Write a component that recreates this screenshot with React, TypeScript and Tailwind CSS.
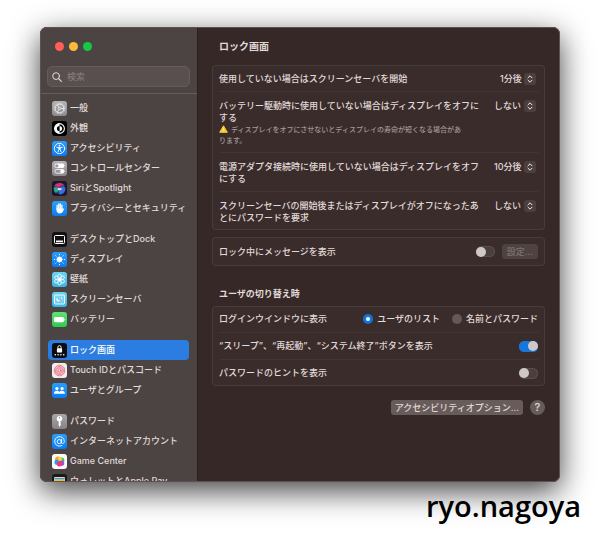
import React, { useState } from "react";
import type { ReactNode } from "react";

type Item = { label: string; tile: string; icon: ReactNode };

const fingerprint = (
  <g fill="none" stroke="#e8677c" strokeWidth="0.9" strokeLinecap="round">
    <circle cx="7.5" cy="7.5" r="5.3" strokeDasharray="5 0.8" />
    <circle cx="7.5" cy="7.5" r="4" strokeDasharray="4 0.7" />
    <circle cx="7.5" cy="7.5" r="2.7" strokeDasharray="3 0.6" />
    <circle cx="7.5" cy="7.5" r="1.4" />
  </g>
);

const groups: Item[][] = [
  [
    {
      label: "一般",
      tile: "bg-linear-to-b from-[#b5b3b6] to-[#8b898d]",
      icon: (
        <g fill="none" stroke="#f2f2f2">
          <circle cx="7.5" cy="7.5" r="4.4" strokeWidth="0.9" />
          <circle cx="7.5" cy="7.5" r="5.3" strokeWidth="0.9" strokeDasharray="0.8 0.86" />
          <circle cx="7.5" cy="7.5" r="1.2" strokeWidth="0.7" />
          <path d="M8.7 7.5h3.2M6.9 6.5 5.3 3.7M6.9 8.5l-1.6 2.8" strokeWidth="0.8" />
        </g>
      ),
    },
    {
      label: "外観",
      tile: "bg-black",
      icon: (
        <g>
          <circle cx="7.5" cy="7.5" r="4.9" fill="none" stroke="#fff" strokeWidth="1.1" />
          <path d="M7.5 2.6a4.9 4.9 0 0 0 0 9.8z" fill="#fff" />
          <path d="M7.5 4.9a2.6 2.6 0 0 1 0 5.2z" fill="#fff" />
          <path d="M7.5 4.9a2.6 2.6 0 0 0 0 5.2z" fill="#000" />
        </g>
      ),
    },
    {
      label: "アクセシビリティ",
      tile: "bg-linear-to-b from-[#2a9dfc] to-[#0a7cf5]",
      icon: (
        <g fill="none" stroke="#fff" strokeLinecap="round">
          <circle cx="7.5" cy="7.5" r="5.2" strokeWidth="0.9" />
          <circle cx="7.5" cy="4.6" r="0.9" fill="#fff" stroke="none" />
          <path d="M4.7 6.3l2 .4h1.6l2-.4M6.8 6.7v1.8l-.9 2.5M8.2 6.7v1.8l.9 2.5M7.5 6.7v1.6" strokeWidth="0.9" />
        </g>
      ),
    },
    {
      label: "コントロールセンター",
      tile: "bg-linear-to-b from-[#b5b3b6] to-[#8b898d]",
      icon: (
        <g>
          <rect x="2.5" y="2.6" width="10" height="4.4" rx="2.2" fill="#fff" />
          <circle cx="4.8" cy="4.8" r="1.6" fill="#9b999c" />
          <rect x="2.9" y="8.4" width="9.2" height="3.8" rx="1.9" fill="none" stroke="#fff" strokeWidth="0.8" />
          <circle cx="10.2" cy="10.3" r="2" fill="#fff" />
        </g>
      ),
    },
    {
      label: "SiriとSpotlight",
      tile: "bg-[#1c1530]",
      icon: (
        <g>
          <circle cx="7.5" cy="7.5" r="6" fill="#20365a" />
          <path d="M2 5.5C4 1 10.5 0.8 12.7 5 10 3.8 7.5 5 7 7.5 5.5 5.5 3.5 5 2 5.5z" fill="#d62f6d" />
          <path d="M1.7 7c2-1.8 4.3-.8 5.5.8-.4 2.2-2 4-3.6 4.2A6 6 0 0 1 1.7 7z" fill="#2aa58a" />
          <path d="M7 7.5c2-2.5 4.8-2.3 6.3-.6.5 3-1.8 6.3-5.3 6.5-1.7-1.4-2-4-1-5.9z" fill="#3a6fd8" />
          <path d="M5.2 8.3C6.4 6.6 8.5 6.4 10 8c-1.2 1.6-3.4 1.9-4.8.3z" fill="#f4f0fb" opacity="0.9" />
        </g>
      ),
    },
    {
      label: "プライバシーとセキュリティ",
      tile: "bg-linear-to-b from-[#2a9dfc] to-[#0a7cf5]",
      icon: (
        <g fill="none" stroke="#fff" strokeLinecap="round" strokeWidth="1.3">
          <path d="M5.1 8V4.3M6.7 7V3M8.3 7V3M9.9 8V4.1" />
          <path d="M4.5 7.3h6v1.5l1.2-1.5.6.5-1.7 3.2c-.6 1-1.5 1.4-2.8 1.4-2 0-3.3-1.3-3.3-3.2z" fill="#fff" stroke="none" />
        </g>
      ),
    },
  ],
  [
    {
      label: "デスクトップとDock",
      tile: "bg-[#111]",
      icon: (
        <g>
          <rect x="2.5" y="3.5" width="10" height="8" rx="1" fill="none" stroke="#fff" />
          <rect x="4" y="8.5" width="7" height="1.8" rx="0.3" fill="#fff" />
        </g>
      ),
    },
    {
      label: "ディスプレイ",
      tile: "bg-linear-to-b from-[#2a9dfc] to-[#0a7cf5]",
      icon: (
        <g stroke="#fff" strokeLinecap="round" strokeWidth="1">
          <circle cx="7.5" cy="7.5" r="2.5" fill="#fff" />
          <path d="M7.5 2.3v.4M7.5 12.3v.4M2.3 7.5h.4M12.3 7.5h.4M3.8 3.8l.3.3M10.9 10.9l.3.3M3.8 11.2l.3-.3M10.9 4.1l.3-.3" />
        </g>
      ),
    },
    {
      label: "壁紙",
      tile: "bg-linear-to-b from-[#6bd3f5] to-[#37b6e6]",
      icon: (
        <g fill="none" stroke="#fff" strokeWidth="0.8">
          <ellipse cx="7.5" cy="4.6" rx="1.8" ry="2.6" />
          <ellipse cx="7.5" cy="10.4" rx="1.8" ry="2.6" />
          <ellipse cx="7.5" cy="4.6" rx="1.8" ry="2.6" transform="rotate(60 7.5 7.5)" />
          <ellipse cx="7.5" cy="4.6" rx="1.8" ry="2.6" transform="rotate(120 7.5 7.5)" />
          <ellipse cx="7.5" cy="4.6" rx="1.8" ry="2.6" transform="rotate(240 7.5 7.5)" />
          <ellipse cx="7.5" cy="4.6" rx="1.8" ry="2.6" transform="rotate(300 7.5 7.5)" />
          <circle cx="7.5" cy="7.5" r="1.1" fill="#fff" />
        </g>
      ),
    },
    {
      label: "スクリーンセーバ",
      tile: "bg-linear-to-b from-[#6bd3f5] to-[#37b6e6]",
      icon: (
        <g>
          <rect x="2.5" y="3" width="10" height="9" rx="0.8" fill="#ffffff33" stroke="#fff" strokeWidth="0.9" />
          <path d="M5.6 5.6a2.1 2.1 0 1 0 2.7 2.9 2.2 2.2 0 0 1-2.7-2.9z" fill="#fff" />
          <circle cx="9.6" cy="6.2" r="0.7" fill="#fff" />
          <circle cx="10.3" cy="9" r="0.5" fill="#fff" />
        </g>
      ),
    },
    {
      label: "バッテリー",
      tile: "bg-linear-to-b from-[#5fe276] to-[#2fc950]",
      icon: (
        <g fill="#fff">
          <rect x="2" y="5" width="10" height="5.2" rx="1.4" />
          <path d="M12.5 6.5c.7.2.9.6.9 1.1s-.2.9-.9 1.1z" />
        </g>
      ),
    },
  ],
  [
    {
      label: "ロック画面",
      tile: "bg-[#0d0d0f]",
      icon: (
        <g>
          <path d="M5.9 5.5V4.2a1.6 1.6 0 0 1 3.2 0v1.3" fill="none" stroke="#fff" strokeWidth="0.9" />
          <rect x="4.9" y="5.2" width="5.2" height="4.2" rx="0.7" fill="#fff" />
          <g fill="#fff">
            <circle cx="3.3" cy="11.7" r="0.8" />
            <circle cx="6.1" cy="11.7" r="0.8" />
            <circle cx="8.9" cy="11.7" r="0.8" />
            <circle cx="11.7" cy="11.7" r="0.8" />
          </g>
        </g>
      ),
    },
    { label: "Touch IDとパスコード", tile: "bg-[#f1eded]", icon: fingerprint },
    {
      label: "ユーザとグループ",
      tile: "bg-linear-to-b from-[#2a9dfc] to-[#0a7cf5]",
      icon: (
        <g fill="#fff">
          <circle cx="4.9" cy="5.5" r="1.6" />
          <circle cx="10.1" cy="5.5" r="1.6" />
          <path d="M1.9 10.8c0-2 1.3-3 3-3 1.1 0 2 .5 2.5 1.3.5-.8 1.5-1.3 2.6-1.3 1.7 0 3 1 3 3z" />
        </g>
      ),
    },
  ],
  [
    {
      label: "パスワード",
      tile: "bg-linear-to-b from-[#a9a7aa] to-[#858387]",
      icon: (
        <g>
          <circle cx="7.5" cy="4.8" r="2.7" fill="#fff" />
          <circle cx="7.5" cy="3.8" r="0.7" fill="#8f8d91" />
          <path d="M6.7 7h1.6v1.2l.9.7-.9.7.8.8-.8.7v.9l-.8.8-.8-.8z" fill="#fff" />
        </g>
      ),
    },
    {
      label: "インターネットアカウント",
      tile: "bg-linear-to-b from-[#2a9dfc] to-[#0a7cf5]",
      icon: (
        <g fill="none" stroke="#fff" strokeWidth="0.9" strokeLinecap="round">
          <circle cx="7.3" cy="7.6" r="2.1" />
          <path d="M9.5 5.5v3c0 1.6 2.8 1.5 2.8-1.1a4.8 4.8 0 1 0-2.4 4.2" />
        </g>
      ),
    },
    {
      label: "Game Center",
      tile: "bg-[#fafafa]",
      icon: (
        <g>
          <circle cx="6" cy="5.6" r="3" fill="#f9a825" />
          <circle cx="9.3" cy="6.5" r="3.1" fill="#35c759" />
          <circle cx="5.1" cy="8.2" r="2.6" fill="#1fa2f5" />
          <circle cx="9.6" cy="9.2" r="2.6" fill="#a54be0" />
          <circle cx="7.4" cy="9.8" r="2.6" fill="#f9307b" />
          <circle cx="8" cy="5" r="2" fill="#ffd633" />
        </g>
      ),
    },
    {
      label: "ウォレットとApple Pay",
      tile: "bg-[#1a1a1c]",
      icon: (
        <g>
          <rect x="2" y="3" width="11" height="9" rx="1" fill="#d8d4c8" />
          <rect x="2.5" y="4" width="10" height="1.5" fill="#3b9ad8" />
          <rect x="2.5" y="5.5" width="10" height="1.5" fill="#f0b93a" />
          <rect x="2.5" y="7" width="10" height="1.5" fill="#5cb85c" />
        </g>
      ),
    },
  ],
];

function Sidebar() {
  return (
    <aside className="flex w-[158px] shrink-0 flex-col border-r border-[#2a201f] bg-[#4c4442]">
      <div className="flex gap-[5px] px-[15px] pt-[15px]">
        <button aria-label="閉じる" className="size-[9px] rounded-full bg-[#ff5f57]" />
        <button aria-label="しまう" className="size-[9px] rounded-full bg-[#febb3a]" />
        <button aria-label="拡大" className="size-[9px] rounded-full bg-[#16c845]" />
      </div>
      <div className="mx-[7px] mt-[15px] flex h-[21px] shrink-0 items-center gap-[5px] rounded-[5px] border border-[#655c5a] bg-[#594f4e] px-[4px]">
        <svg viewBox="0 0 10 10" className="size-[10px] shrink-0" fill="none" stroke="#e2dedd" strokeLinecap="round">
          <circle cx="4.1" cy="4.1" r="3.4" />
          <path d="M6.7 6.7 9.3 9.3" strokeWidth="1.2" />
        </svg>
        <input
          type="search"
          aria-label="検索"
          placeholder="検索"
          className="w-full min-w-0 bg-transparent text-[9px] leading-[12px] text-[#e6e1e0] outline-none placeholder:text-[#8c8281]"
        />
      </div>
      <nav className="mt-[6px] flex min-h-0 flex-1 flex-col gap-[11px] overflow-hidden border-t border-[#655d5b] px-2 pt-[4px]">
        {groups.map((group, i) => (
          <ul key={i} className="shrink-0">
            {group.map((item) => {
              const current = item.label === "ロック画面";
              return (
                <li key={item.label}>
                  <a
                    href="#"
                    aria-current={current ? "page" : undefined}
                    className={
                      "flex h-5 items-center gap-[3px] rounded-[4px] px-[4px] text-[9px] leading-[12px] font-medium whitespace-nowrap " +
                      (current ? "bg-[#2b7de1] text-white" : "text-[#e0dad9]")
                    }
                  >
                    <span className={"size-[15px] shrink-0 overflow-hidden rounded-[3px] " + item.tile}>
                      <svg viewBox="0 0 15 15" className="size-full">
                        {item.icon}
                      </svg>
                    </span>
                    {item.label}
                  </a>
                </li>
              );
            })}
          </ul>
        ))}
      </nav>
    </aside>
  );
}

function Card({ children }: { children: ReactNode }) {
  return (
    <div className="divide-y divide-[#423534] rounded-[4px] bg-[#3a2c2b] px-[7px] inset-ring inset-ring-[#483c3b]">
      {children}
    </div>
  );
}

function SelectRow({ id, label, value, note }: { id: string; label: string; value: string; note?: string }) {
  return (
    <div className="flex items-start justify-between pt-[8px] pb-[6px]">
      <div className="max-w-[264px]">
        <label htmlFor={id} className="block">
          {label}
        </label>
        {note && (
          <p className="max-w-[246px] text-[7px] leading-[11px] text-[#a39998]">
            <svg viewBox="0 0 9 8" className="mr-[3px] inline-block h-[8px] w-[9px] align-[-1px]">
              <path d="M4.5.8 8.3 7.3H.7z" fill="#fbcb2f" stroke="#fbcb2f" strokeWidth="1" strokeLinejoin="round" />
              <path d="M4.5 3v2.2M4.5 6.2v.6" stroke="#fff3c4" strokeWidth="0.8" />
            </svg>
            {note}
          </p>
        )}
      </div>
      <div className="relative flex shrink-0 items-center">
        <select id={id} className="h-[12px] appearance-none bg-transparent pr-[16px] leading-[12px] font-medium outline-none">
          <option>{value}</option>
        </select>
        <span className="pointer-events-none absolute right-[2px] flex size-[12px] items-center justify-center rounded-[3px] bg-[#4c403f]">
          <svg viewBox="0 0 6 8" className="h-[8px] w-[6px]" fill="none" stroke="#efeaea" strokeLinecap="round" strokeLinejoin="round">
            <path d="M1 2.8 3 .8l2 2M1 5.2l2 2 2-2" />
          </svg>
        </span>
      </div>
    </div>
  );
}

function Toggle({ id, initial }: { id: string; initial: boolean }) {
  const [on, setOn] = useState(initial);
  return (
    <input
      id={id}
      type="checkbox"
      role="switch"
      checked={on}
      onChange={() => setOn(!on)}
      className="flex h-[11px] w-[19px] appearance-none items-center rounded-full bg-[#4b3f3e] inset-ring inset-ring-[#5a4e4d] before:size-[10px] before:rounded-full before:bg-[#cfc8c7] checked:justify-end checked:bg-[#1676dc] checked:inset-ring-[#1676dc]"
    />
  );
}

function Radio({ label, value, picked, pick }: { label: string; value: string; picked: string; pick: (v: string) => void }) {
  return (
    <label className="flex items-center gap-[4px]">
      <input
        type="radio"
        name="login-window"
        value={value}
        checked={picked === value}
        onChange={() => pick(value)}
        className="flex size-[10px] appearance-none items-center justify-center rounded-full bg-[#655858] checked:bg-[#0f74dd] checked:before:size-[4px] checked:before:rounded-full checked:before:bg-white"
      />
      {label}
    </label>
  );
}

export default function App() {
  const [login, setLogin] = useState("list");
  return (
    <div className="relative h-screen overflow-hidden bg-white px-10 pt-[27px] pb-[53px] font-['Inter','Noto_Sans_CJK_JP',sans-serif]">
      <div className="flex h-full overflow-hidden rounded-[7px] bg-[#362827] shadow-[0_9px_30px_rgba(0,0,0,0.75)] outline -outline-offset-1 outline-[#5c5250]">
        <Sidebar />
        <main className="min-w-0 flex-1 pr-[15px] pl-[14px] text-[9px] leading-[12px] font-medium text-[#e0dad9]">
          <h1 className="flex h-[38px] items-center px-[7px] text-[10px] font-bold">ロック画面</h1>
          <Card>
            <SelectRow id="saver" label="使用していない場合はスクリーンセーバを開始" value="1分後" />
            <SelectRow
              id="battery"
              label="バッテリー駆動時に使用していない場合はディスプレイをオフにする"
              value="しない"
              note="ディスプレイをオフにさせないとディスプレイの寿命が短くなる場合があります。"
            />
            <SelectRow id="adapter" label="電源アダプタ接続時に使用していない場合はディスプレイをオフにする" value="10分後" />
            <SelectRow
              id="password"
              label="スクリーンセーバの開始後またはディスプレイがオフになったあとにパスワードを要求"
              value="しない"
            />
          </Card>
          <div className="mt-[7px]">
            <Card>
              <div className="flex h-[29px] items-center gap-[7px]">
                <label htmlFor="message" className="flex-1">
                  ロック中にメッセージを表示
                </label>
                <Toggle id="message" initial={false} />
                <button disabled className="h-[15px] rounded-[3px] bg-[#4f4342] px-[5px] text-[#7d7271]">
                  設定...
                </button>
              </div>
            </Card>
          </div>
          <h2 className="mt-[22px] px-[7px] font-bold">ユーザの切り替え時</h2>
          <div className="mt-[6px]">
            <Card>
              <fieldset className="flex h-[27px] items-center">
                <legend className="float-left flex-1">ログインウインドウに表示</legend>
                <div className="ml-auto flex gap-[12px]">
                  <Radio label="ユーザのリスト" value="list" picked={login} pick={setLogin} />
                  <Radio label="名前とパスワード" value="name" picked={login} pick={setLogin} />
                </div>
              </fieldset>
              <div className="flex h-[27px] items-center justify-between">
                <label htmlFor="buttons">“スリープ”、“再起動”、“システム終了”ボタンを表示</label>
                <Toggle id="buttons" initial={true} />
              </div>
              <div className="flex h-[26px] items-center justify-between">
                <label htmlFor="hint">パスワードのヒントを表示</label>
                <Toggle id="hint" initial={false} />
              </div>
            </Card>
          </div>
          <div className="mt-[14px] flex items-center justify-end gap-[7px]">
            <button className="h-[15px] rounded-[3px] bg-[#685c5b] px-[4px]">アクセシビリティオプション...</button>
            <button aria-label="ヘルプ" className="size-[15px] rounded-full bg-[#685c5b] text-[11px] leading-[15px]">
              ?
            </button>
          </div>
        </main>
      </div>
      <p className="absolute right-[19px] bottom-[11px] font-['Comic_Sans_MS','Open_Sans',sans-serif] text-[29px] leading-[36px] font-semibold text-black">
        ryo.nagoya
      </p>
    </div>
  );
}
